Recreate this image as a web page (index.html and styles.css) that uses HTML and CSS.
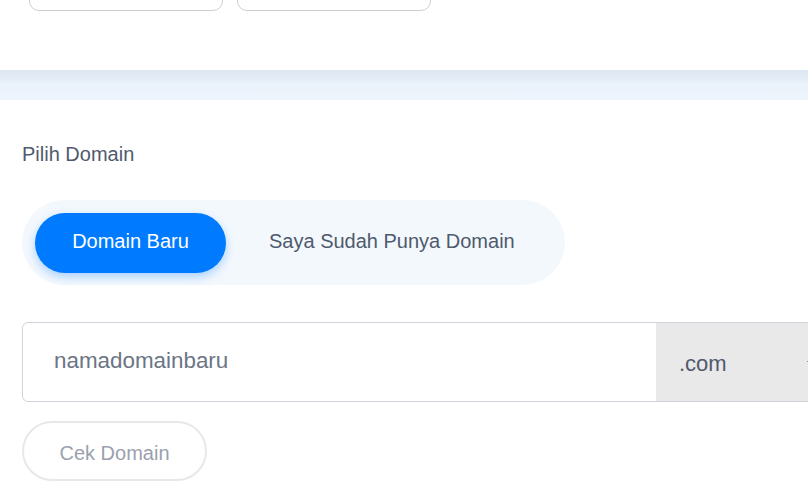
FILE: index.html
```html
<!DOCTYPE html>
<html lang="id">
<head>
<meta charset="utf-8">
<title>Pilih Domain</title>
<link rel="stylesheet" href="styles.css">
</head>
<body>
<div class="top">
  <div class="top-buttons">
    <div class="ghost-btn"></div>
    <div class="ghost-btn"></div>
  </div>
</div>
<div class="band"></div>
<main class="main">
  <div class="label">Pilih Domain</div>
  <div class="toggle">
    <button class="tab tab-active">Domain Baru</button>
    <button class="tab">Saya Sudah Punya Domain</button>
  </div>
  <div class="input-group">
    <div class="domain-input">namadomainbaru</div>
    <div class="tld">
      <span>.com</span>
      <svg class="caret" width="10" height="6" viewBox="0 0 10 6"><path d="M0 0 L5 6 L10 0 Z" fill="#555"/></svg>
    </div>
  </div>
  <button class="check-btn">Cek Domain</button>
</main>
</body>
</html>
```
FILE: styles.css
```css
html, body {
  margin: 0;
  padding: 0;
  overflow: hidden;
  background: #fff;
  font-family: "Liberation Sans", Arial, sans-serif;
}
.top {
  display: flow-root;
  height: 70px;
  background: #fff;
}
.top-buttons {
  display: flex;
  gap: 14px;
  padding-left: 29px;
  margin-top: -40px;
}
.ghost-btn {
  width: 192px;
  height: 49px;
  border: 1px solid #cfcfcf;
  border-radius: 10px;
}
.band {
  height: 30px;
  background: linear-gradient(to bottom, #dce6f2 0%, #e9f1fa 45%, #eff5fd 100%);
}
.main {
  padding: 43px 0 0 22px;
}
.label {
  font-size: 20px;
  line-height: 22px;
  color: #4f5a6e;
}
.toggle {
  margin-top: 35px;
  width: 543px;
  height: 85px;
  box-sizing: border-box;
  padding: 12px 13px;
  background: #f3f8fd;
  border-radius: 43px;
  display: flex;
  align-items: center;
}
.tab {
  border: none;
  background: transparent;
  font-family: inherit;
  font-size: 20px;
  line-height: 56px;
  height: 60px;
  padding: 0 0 4px;
  color: #4f5a6e;
  border-radius: 30px;
}
.tab-active {
  width: 191px;
  background: #007bff;
  color: #fff;
  box-shadow: 0 4px 10px rgba(0, 123, 255, 0.3);
}
.tab + .tab {
  padding-left: 43px;
}
.input-group {
  margin-top: 37px;
  display: flex;
  width: 830px;
  height: 80px;
  box-sizing: border-box;
  border: 1px solid #d0d4da;
  border-radius: 6px;
  overflow: hidden;
}
.domain-input {
  width: 633px;
  padding-left: 31px;
  box-sizing: border-box;
  font-size: 22.4px;
  line-height: 76px;
  color: #6b7585;
}
.tld {
  flex: 1;
  background: #e9e9e9;
  display: flex;
  align-items: center;
  padding-left: 23px;
  padding-top: 3px;
  gap: 80px;
  font-size: 22px;
  color: #4f5a6e;
}
.caret {
  flex: none;
}
.check-btn {
  margin-top: 19px;
  width: 185px;
  height: 60px;
  border: 2px solid #e8e8e8;
  border-radius: 30px;
  background: #fff;
  font-family: inherit;
  font-size: 20px;
  color: #9aa0ae;
  padding: 5px 0 0;
}
```
